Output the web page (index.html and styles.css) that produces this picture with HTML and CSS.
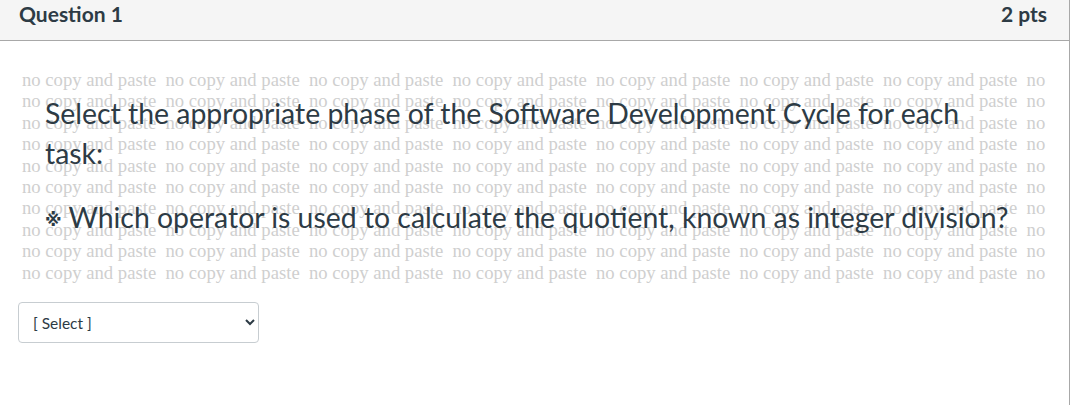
FILE: index.html
```html
<!DOCTYPE html>
<html lang="en">
<head>
    <meta charset="UTF-8">
    <title>Question 1</title>
    <link rel="stylesheet" href="styles.css">
</head>
<body>
    <div class="question">
        <div class="question-header">
            <h2 class="question-title">Question 1</h2>
            <span class="question-points">2 pts</span>
        </div>

        <div class="question-body">
            <div class="question-content">
                <!-- watermark behind the question text -->
                <div class="watermark" aria-hidden="true">
                    <div class="watermark-line">no copy and paste&nbsp; no copy and paste&nbsp; no copy and paste&nbsp; no copy and paste&nbsp; no copy and paste&nbsp; no copy and paste&nbsp; no copy and paste&nbsp; no</div>
                    <div class="watermark-line">no copy and paste&nbsp; no copy and paste&nbsp; no copy and paste&nbsp; no copy and paste&nbsp; no copy and paste&nbsp; no copy and paste&nbsp; no copy and paste&nbsp; no</div>
                    <div class="watermark-line">no copy and paste&nbsp; no copy and paste&nbsp; no copy and paste&nbsp; no copy and paste&nbsp; no copy and paste&nbsp; no copy and paste&nbsp; no copy and paste&nbsp; no</div>
                    <div class="watermark-line">no copy and paste&nbsp; no copy and paste&nbsp; no copy and paste&nbsp; no copy and paste&nbsp; no copy and paste&nbsp; no copy and paste&nbsp; no copy and paste&nbsp; no</div>
                    <div class="watermark-line">no copy and paste&nbsp; no copy and paste&nbsp; no copy and paste&nbsp; no copy and paste&nbsp; no copy and paste&nbsp; no copy and paste&nbsp; no copy and paste&nbsp; no</div>
                    <div class="watermark-line">no copy and paste&nbsp; no copy and paste&nbsp; no copy and paste&nbsp; no copy and paste&nbsp; no copy and paste&nbsp; no copy and paste&nbsp; no copy and paste&nbsp; no</div>
                    <div class="watermark-line">no copy and paste&nbsp; no copy and paste&nbsp; no copy and paste&nbsp; no copy and paste&nbsp; no copy and paste&nbsp; no copy and paste&nbsp; no copy and paste&nbsp; no</div>
                    <div class="watermark-line">no copy and paste&nbsp; no copy and paste&nbsp; no copy and paste&nbsp; no copy and paste&nbsp; no copy and paste&nbsp; no copy and paste&nbsp; no copy and paste&nbsp; no</div>
                    <div class="watermark-line">no copy and paste&nbsp; no copy and paste&nbsp; no copy and paste&nbsp; no copy and paste&nbsp; no copy and paste&nbsp; no copy and paste&nbsp; no copy and paste&nbsp; no</div>
                    <div class="watermark-line">no copy and paste&nbsp; no copy and paste&nbsp; no copy and paste&nbsp; no copy and paste&nbsp; no copy and paste&nbsp; no copy and paste&nbsp; no copy and paste&nbsp; no</div>
                </div>

                <div class="question-text">
                    <p>Select the appropriate phase of the Software Development Cycle for each task:</p>
                    <p class="task"><span class="task-mark">※</span> Which operator is used to calculate the quotient, known as integer division?</p>
                </div>
            </div>

            <select class="answer-select">
                <option>[ Select ]</option>
                <option>Analysis</option>
                <option>Design</option>
                <option>Implementation</option>
                <option>Testing</option>
            </select>
        </div>
    </div>
</body>
</html>
```

FILE: styles.css
```css
:root {
    --text-primary: #2d3b45;
    --header-bg: #f5f5f5;
    --border-color: #a8a8a8;
    --input-border: #c7cdd1;
    --watermark: #cfcfcf;
}

body {
    margin: 0;
    font-family: Lato, "Noto Sans", sans-serif;
    color: var(--text-primary);
    background: #ffffff;
}

.question {
    width: 1070px;
    height: 405px;
    box-sizing: border-box;
    border-right: 1px solid var(--border-color);
}

.question-header {
    display: flex;
    justify-content: space-between;
    align-items: flex-start;
    height: 41px;
    box-sizing: border-box;
    padding: 1px 22px 0 19px;
    background: var(--header-bg);
    border-bottom: 1px solid var(--border-color);
}

.question-title {
    margin: 0;
    font-size: 21px;
    font-weight: 700;
    line-height: 25px;
}

.question-points {
    font-size: 21px;
    font-weight: 700;
    line-height: 25px;
}

.question-body {
    padding: 28px 18px 0;
}

.question-content {
    position: relative;
}

.watermark {
    padding-left: 4px;
    font-family: "Liberation Serif", serif;
    font-size: 14pt;
    line-height: 21.4px;
    color: var(--watermark);
    user-select: none;
}

.watermark-line {
    white-space: nowrap;
}

.question-text {
    position: absolute;
    top: 24px;
    left: 27px;
    width: 972px;
    font-size: 28.4px;
    line-height: 40px;
}

.question-text p {
    margin: 0;
}

.question-text .task {
    margin-top: 24px;
}

.task-mark {
    font-family: "DejaVu Sans", sans-serif;
    font-size: 17px;
    font-weight: 700;
    vertical-align: 2px;
}

.answer-select {
    display: block;
    margin-top: 19px;
    width: 241px;
    height: 41px;
    padding: 0 8px 0 10px;
    font-family: Lato, "Noto Sans", sans-serif;
    font-size: 15.5px;
    color: var(--text-primary);
    background: #ffffff;
    border: 1px solid var(--input-border);
    border-radius: 4px;
}
```
